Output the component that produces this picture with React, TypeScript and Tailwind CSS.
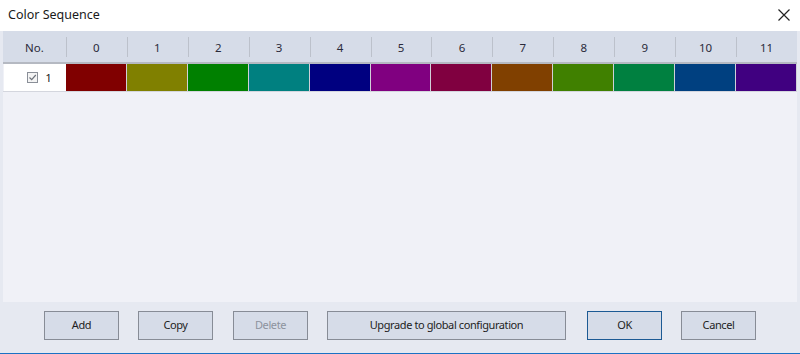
import React from "react";

const colors = ["#800000","#808000","#008000","#008080","#000080","#800080","#800040","#804000","#408000","#008040","#004080","#400080"];

function Btn({ label, w, disabled, primary }: { label: string; w: string; disabled?: boolean; primary?: boolean }) {
  return (
    <div className={`${w} h-[29px] flex items-center justify-center border bg-[#d6dce8] text-[11px] tracking-[-0.4px] ${primary ? "border-[#1c5a94]" : "border-[#878c96]"} ${disabled ? "text-[#8d939e]" : "text-[#1e1e1e]"}`}>
      {label}
    </div>
  );
}

export default function App() {
  return (
    <div className="w-[800px] h-[354px] flex flex-col bg-[#e6e9f1] overflow-hidden" style={{ fontFamily: '"Noto Sans", "Open Sans", sans-serif' }}>
      <div className="h-[31px] bg-white flex items-center justify-between pl-[8px] pr-[8px] shrink-0">
        <span className="text-[12.5px] text-[#1a1a1a] mt-[-1px]">Color Sequence</span>
        <svg width="14" height="14" viewBox="0 0 14 14" className="mr-[1px] mt-[-2px]">
          <path d="M1.5 1.5 L12.5 12.5 M12.5 1.5 L1.5 12.5" stroke="#222" strokeWidth="1.2" fill="none" />
        </svg>
      </div>
      <div className="mx-[3px] h-[271px] bg-[#f0f1f7] flex flex-col shrink-0">
        <div className="h-[33px] bg-[#d6dce8] flex border-b-2 border-[#b5b9c2] text-[11.5px] text-[#2a2a3a] pt-[2px]">
          <div className="w-[63px] flex items-center justify-center">No.</div>
          {colors.map((_, i) => (
            <div key={i} className="w-[61px] flex items-center justify-center relative">
              <div className="absolute left-0 top-[4px] bottom-[5px] w-px bg-[#bcc1cb]" />
              {i}
            </div>
          ))}
        </div>
        <div className="h-[28px] flex border-b border-[#d4d6de]">
          <div className="w-[62px] ml-[1px] bg-white flex items-center justify-end pr-[14px] gap-[7px]">
            <div className="w-[11px] h-[11px] border border-[#8a8f98] bg-[#f4f4f4] flex items-center justify-center">
              <svg width="9" height="9" viewBox="0 0 9 9"><path d="M1.5 4.5 L3.7 6.7 L7.8 2" stroke="#6d727b" strokeWidth="1.2" fill="none" /></svg>
            </div>
            <span className="text-[11.5px] text-[#1a1a1a]">1</span>
          </div>
          {colors.map((c, i) => (
            <div key={i} className="w-[61px] border-r border-[#d0d0d8]" style={{ backgroundColor: c }} />
          ))}
        </div>
      </div>
      <div className="flex pt-[9px] pl-[44px] shrink-0">
        <Btn label="Add" w="w-[75px]" />
        <div className="w-[19px]" />
        <Btn label="Copy" w="w-[75px]" />
        <div className="w-[20px]" />
        <Btn label="Delete" w="w-[75px]" disabled />
        <div className="w-[19px]" />
        <Btn label="Upgrade to global configuration" w="w-[239px]" />
        <div className="w-[21px]" />
        <Btn label="OK" w="w-[75px]" primary />
        <div className="w-[19px]" />
        <Btn label="Cancel" w="w-[75px]" />
      </div>
      <div className="flex-1" />
      <div className="h-px bg-[#1a72c4] shrink-0" />
    </div>
  );
}
